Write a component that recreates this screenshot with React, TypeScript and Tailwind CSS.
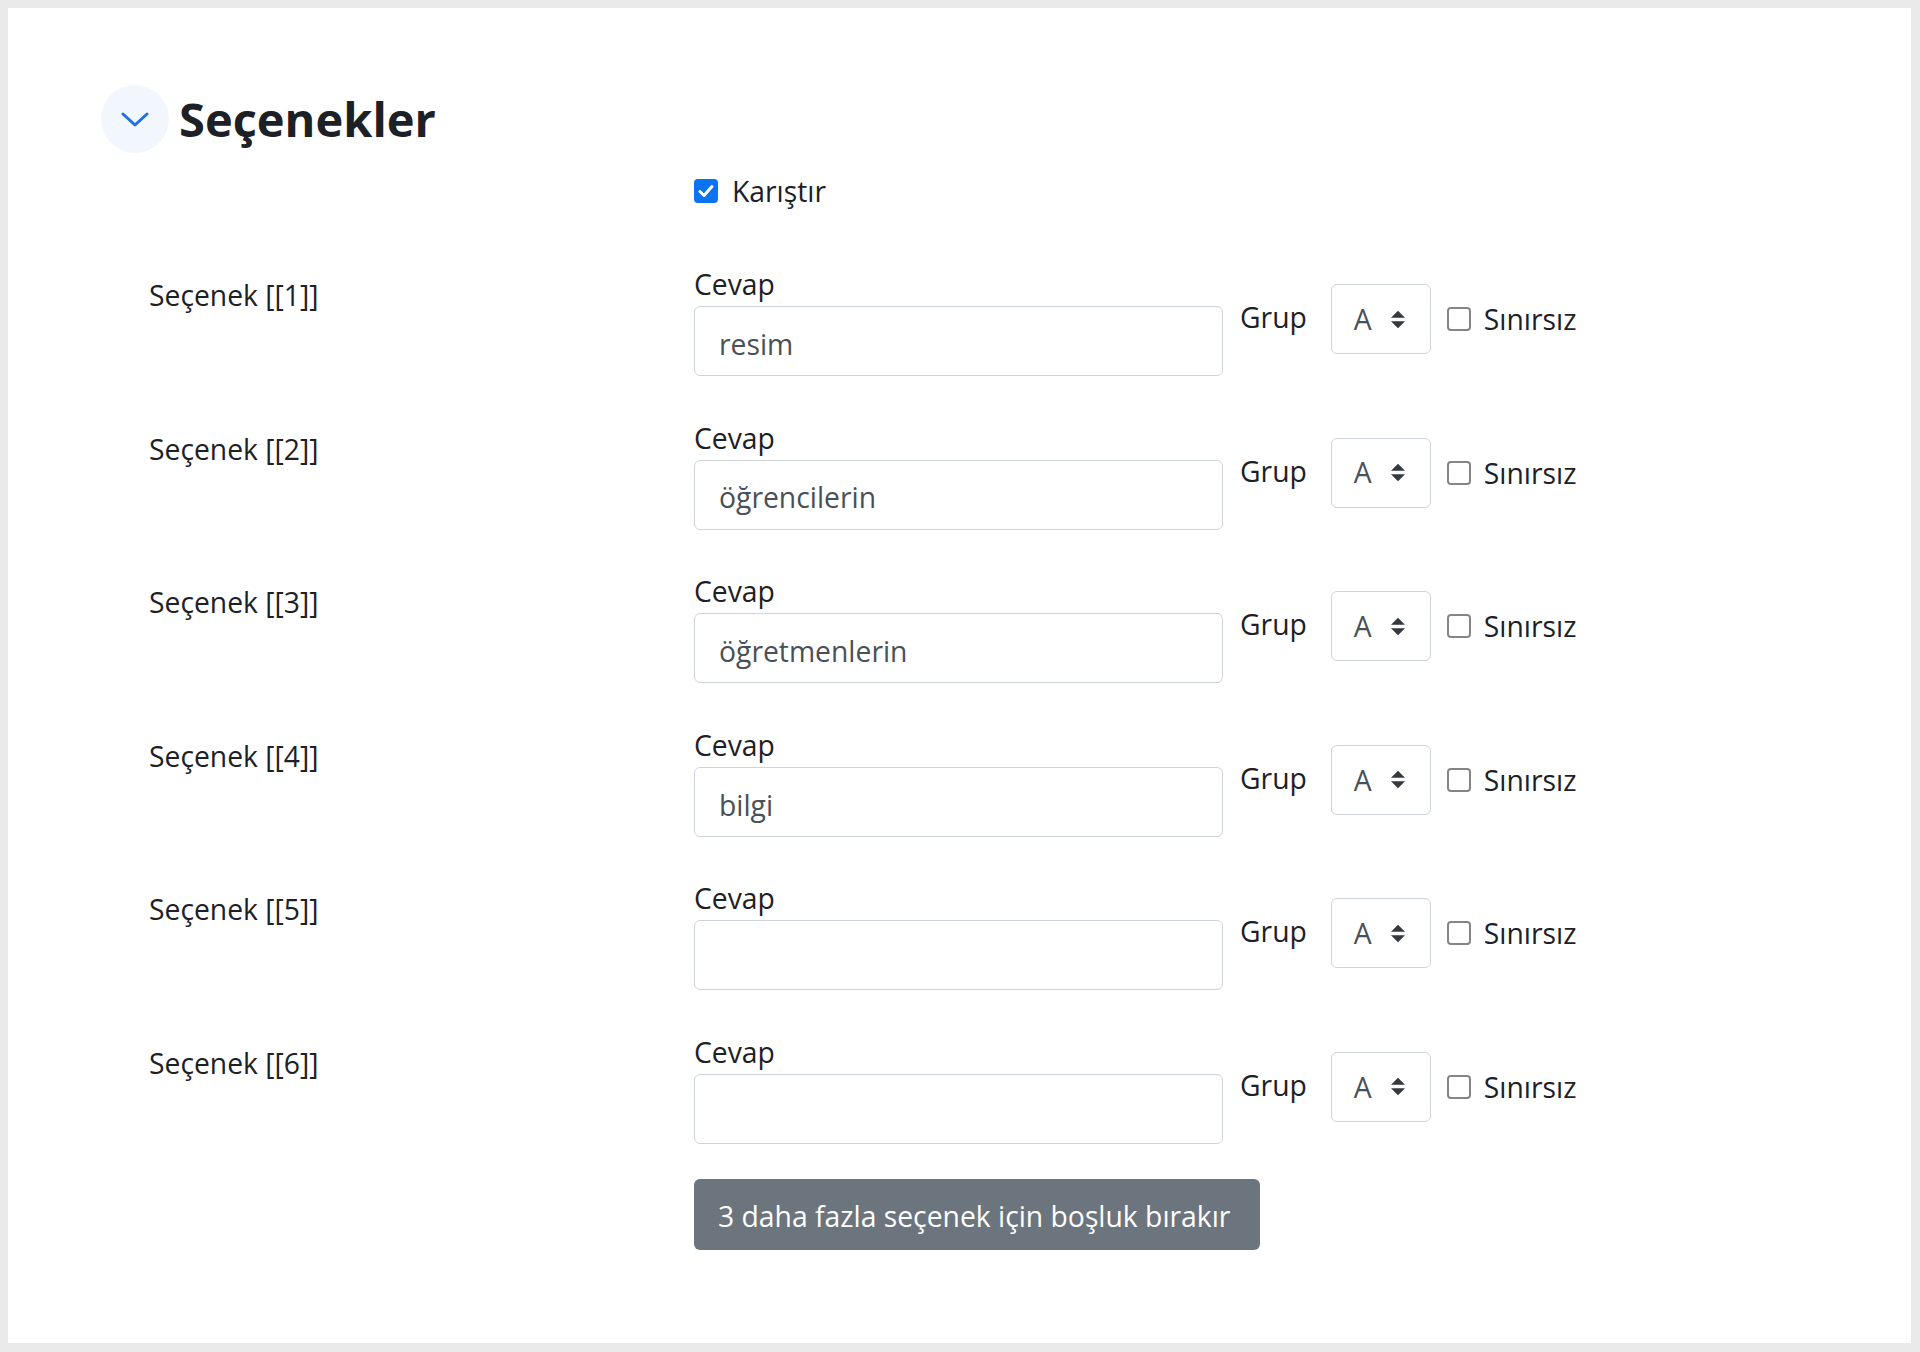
import React from "react";

const rows = [
  { n: 1, v: "resim" },
  { n: 2, v: "öğrencilerin" },
  { n: 3, v: "öğretmenlerin" },
  { n: 4, v: "bilgi" },
  { n: 5, v: "" },
  { n: 6, v: "" },
];

function Unchecked() {
  return <div className="w-[24px] h-[24px] shrink-0 rounded-[4px] border-2 border-[#858585] bg-white" />;
}

function Checked() {
  return (
    <div className="w-[24px] h-[24px] shrink-0 rounded-[4px] bg-[#0b72f0] flex items-center justify-center">
      <svg width="16" height="14" viewBox="0 0 16 14" fill="none">
        <path d="M2 7.5 L6 11.5 L14 2.5" stroke="white" strokeWidth="3" strokeLinecap="round" strokeLinejoin="round" />
      </svg>
    </div>
  );
}

export default function App() {
  return (
    <div
      className="w-[1920px] h-[1352px] bg-[#eaeaea] pt-[8px] pl-[8px] pr-[9px] pb-[9px]"
      style={{ fontFamily: '"Open Sans", "Noto Sans", sans-serif' }}
    >
      <div className="w-full h-full bg-white pt-[77px] pl-[93px] text-[#1d2125]">
        <div className="flex items-center h-[68px]">
          <div className="w-[68px] h-[68px] rounded-full bg-[#f2f6fd] flex items-center justify-center">
            <svg width="28" height="15" viewBox="0 0 28 15" fill="none">
              <path d="M2 2 L14 13 L26 2" stroke="#1f6fe5" strokeWidth="3" strokeLinecap="round" strokeLinejoin="round" />
            </svg>
          </div>
          <h3 className="ml-[10px] text-[47px] font-bold leading-none">Seçenekler</h3>
        </div>

        <div className="ml-[593px] mt-[17px] flex items-center h-[42px]">
          <Checked />
          <span className="ml-[14px] text-[28.3px] leading-[42px]">Karıştır</span>
        </div>

        <div className="mt-[51px] ml-[48px] flex flex-col gap-[40.6px] text-[28.3px]">
          {rows.map((r) => (
            <div key={r.n} className="flex items-start">
              <div className="w-[545px] mt-[11px] leading-[42px]">Seçenek [[{r.n}]]</div>
              <div className="w-[529px] flex flex-col">
                <div className="leading-[42px]">Cevap</div>
                <div className="mt-[1px] h-[70px] rounded-[6px] border border-[#cfd4da] flex items-center pl-[24px] pt-[6px] text-[#495057]">
                  {r.v}
                </div>
              </div>
              <div className="mt-[21px] ml-[17px] h-[70px] flex items-center">
                <span className="leading-[42px] -mt-[4px]">Grup</span>
                <div className="ml-[24px] w-[100px] h-[70px] rounded-[6px] border border-[#cfd4da] flex items-center pl-[22px] text-[#495057]">
                  <span>A</span>
                  <svg className="ml-[19px]" width="14" height="19" viewBox="0 0 4 5">
                    <path d="M2 0L0 2h4zm0 5L0 3h4z" fill="#343a40" />
                  </svg>
                </div>
                <div className="ml-[16px]">
                  <Unchecked />
                </div>
                <span className="ml-[13px] leading-[42px]">Sınırsız</span>
              </div>
            </div>
          ))}
          <div className="ml-[545px] -mt-[5.6px]">
            <button className="h-[71px] pl-[24px] pr-[30px] pt-[4px] rounded-[6px] bg-[#6c757d] text-white text-[28.3px] leading-[42px]">
              3 daha fazla seçenek için boşluk bırakır
            </button>
          </div>
        </div>
      </div>
    </div>
  );
}
